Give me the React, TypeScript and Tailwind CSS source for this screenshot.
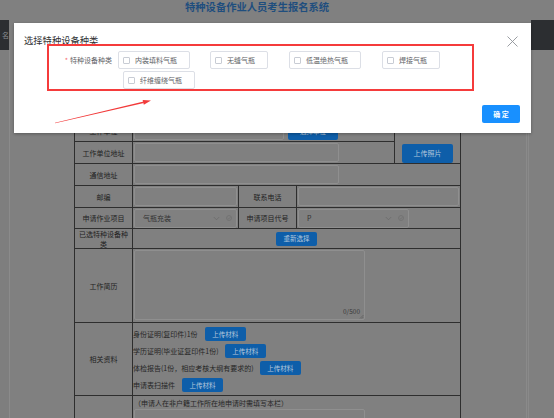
import React from "react";

const Label = ({ children, className = "" }: { children?: React.ReactNode; className?: string }) => (
  <div className={`flex items-center justify-center bg-[#808080] text-center text-[7px] leading-[10px] text-[#222222] ${className}`}>
    {children}
  </div>
);

const Cell = ({ children, className = "" }: { children?: React.ReactNode; className?: string }) => (
  <div className={`flex bg-[#808080] ${className}`}>{children}</div>
);

const Input = ({ className = "" }: { className?: string }) => (
  <div className={`rounded-[2px] border border-[#8f8f8f] ${className}`} />
);

const Btn = ({ children, className = "" }: { children?: React.ReactNode; className?: string }) => (
  <div
    className={`flex items-center justify-center rounded-[2px] bg-[#0e5ea9] text-[6.5px] leading-none text-[#b3c7dc] ${className}`}
  >
    {children}
  </div>
);

const SelectBox = ({ text, className = "", textClass = "" }: { text: string; className?: string; textClass?: string }) => (
  <div className={`flex items-center rounded-[2px] border border-[#8f8f8f] ${className}`}>
    <span className={`flex-1 text-[7px] leading-none text-[#333333] ${textClass}`}>{text}</span>
    <svg width="7" height="5" viewBox="0 0 7 5" className="mr-[6px]">
      <path d="M0.8 1 L3.5 3.8 L6.2 1" fill="none" stroke="#6b6b6b" strokeWidth="0.8" />
    </svg>
    <svg width="6" height="6" viewBox="0 0 6 6" className="mr-[4px]">
      <circle cx="3" cy="3" r="2.5" fill="none" stroke="#6b6b6b" strokeWidth="0.6" />
      <path d="M1.7 3.1 L2.7 4 L4.3 2.2" fill="none" stroke="#6b6b6b" strokeWidth="0.6" />
    </svg>
  </div>
);

const Check = ({ label, w, className = "" }: { label: string; w: string; className?: string }) => (
  <div
    className={`flex h-[18px] items-center rounded-[2px] border border-[#dcdfe6] bg-white pl-[4px] ${w} ${className}`}
  >
    <span className="h-[7px] w-[7px] rounded-[1px] border border-[#c8ccd4] bg-white" />
    <span className="ml-[5px] whitespace-nowrap text-[7px] leading-none text-[#606266]">{label}</span>
  </div>
);

export default function App() {
  return (
    <div className="relative h-[418px] w-[554px] overflow-hidden bg-[#808080] font-['Noto_Sans_CJK_SC','Noto_Sans',sans-serif]">
      {/* header */}
      <div className="flex h-[20px] pl-[185px] pt-[1px]">
        <span className="whitespace-nowrap text-[10.3px] font-bold leading-[12px] text-[#1f4e7e]">
          特种设备作业人员考生报名系统
        </span>
      </div>
      {/* nav */}
      <div className="flex h-[30px]">
        <div className="flex w-[9px] items-center justify-end bg-[#2c2e31]">
          <span className="whitespace-nowrap text-[7px] leading-none text-[#8d8f92]">名</span>
        </div>
        <div className="flex-1" />
        <div className="w-[23px] bg-[#2c2e31]" />
      </div>
      {/* main */}
      <div className="flex h-[368px]">
        <div className="w-[10px] border-r border-[#8b8b8b] bg-[#7e7e7e]" />
        <div className="w-[64px]" />
        <div className="mt-[3px] w-[387px]">
          <div className="grid grid-cols-[57px_105px_57px_97px_65px] grid-rows-[21px_21px_21px_21px_21px_21px_21px_20px_19px_73px_72px_40px] gap-px bg-[#2e2e2e] p-px">
            {/* rows covered by the dialog */}
            <Label />
            <Cell className="items-center pl-px">
              <Input className="h-[19px] w-[102px]" />
            </Cell>
            <Label />
            <Cell className="items-center pl-px">
              <Input className="h-[19px] w-[95px]" />
            </Cell>
            <Cell className="row-span-5 items-end justify-center">
              <Btn className="h-[19px] w-[51px] text-[7px]">上传照片</Btn>
            </Cell>

            <Label />
            <Cell className="items-center pl-px">
              <Input className="h-[19px] w-[102px]" />
            </Cell>
            <Label />
            <Cell className="items-center pl-px">
              <Input className="h-[19px] w-[95px]" />
            </Cell>

            <Label />
            <Cell className="items-center pl-px">
              <Input className="h-[19px] w-[102px]" />
            </Cell>
            <Label />
            <Cell className="items-center pl-px">
              <Input className="h-[19px] w-[95px]" />
            </Cell>

            <Label>工作单位</Label>
            <Cell className="col-span-3 items-end pb-px pl-px">
              <Input className="h-[18px] w-[150px]" />
              <Btn className="ml-[4px] h-[18px] w-[50px]">选择单位</Btn>
            </Cell>

            {/* visible rows */}
            <Label>工作单位地址</Label>
            <Cell className="col-span-3 items-center pl-px">
              <Input className="h-[19px] w-[205px]" />
            </Cell>

            <Label>通信地址</Label>
            <Cell className="col-span-4 items-center pl-px">
              <Input className="h-[19px] w-[205px]" />
            </Cell>

            <Label>邮编</Label>
            <Cell className="items-center pl-px">
              <Input className="h-[19px] w-[103px]" />
            </Cell>
            <Label>联系电话</Label>
            <Cell className="col-span-2 items-center pl-px">
              <Input className="h-[19px] w-[161px]" />
            </Cell>

            <Label>申请作业项目</Label>
            <Cell className="items-center pl-px">
              <SelectBox text="气瓶充装" className="h-[19px] w-[103px]" textClass="pl-[8px]" />
            </Cell>
            <Label>申请项目代号</Label>
            <Cell className="col-span-2 items-center pl-px">
              <SelectBox text="P" className="h-[19px] w-[111px]" textClass="pl-[8px]" />
            </Cell>

            <Label className="px-[3px]">已选特种设备种类</Label>
            <Cell className="col-span-4 items-center justify-center">
              <Btn className="h-[14px] w-[41px]">重新选择</Btn>
            </Cell>

            <Label>工作简历</Label>
            <Cell className="col-span-4 items-start pl-px pt-px">
              <div className="relative h-[70px] w-[231px] rounded-[2px] border border-[#8f8f8f]">
                <span className="absolute bottom-[5px] right-[4px] text-[6.5px] leading-none text-[#3a3a3a]">0/500</span>
                <svg width="5" height="5" viewBox="0 0 5 5" className="absolute bottom-0 right-0">
                  <path d="M1 4.5 L4.5 1 M2.8 4.5 L4.5 2.8" stroke="#555555" strokeWidth="0.6" />
                </svg>
              </div>
            </Cell>

            <Label>相关资料</Label>
            <Cell className="col-span-4 flex-col justify-center gap-[3px] pt-px">
              <div className="flex items-center">
                <span className="whitespace-nowrap text-[7px] leading-none text-[#262626]">身份证明(复印件)1份</span>
                <Btn className="ml-[7px] h-[14px] w-[41px]">上传材料</Btn>
              </div>
              <div className="flex items-center">
                <span className="whitespace-nowrap text-[7px] leading-none text-[#262626]">学历证明(毕业证复印件1份)</span>
                <Btn className="ml-[6px] h-[14px] w-[41px]">上传材料</Btn>
              </div>
              <div className="flex items-center">
                <span className="whitespace-nowrap text-[7px] leading-none text-[#262626]">体检报告(1份，相应考核大纲有要求的)</span>
                <Btn className="ml-[6px] h-[14px] w-[41px]">上传材料</Btn>
              </div>
              <div className="flex items-center">
                <span className="whitespace-nowrap text-[7px] leading-none text-[#262626]">申请表扫描件</span>
                <Btn className="ml-[7px] h-[14px] w-[41px]">上传材料</Btn>
              </div>
            </Cell>

            <Label></Label>
            <Cell className="col-span-4 flex-col pl-px pt-[3px]">
              <span className="whitespace-nowrap text-[7px] leading-[8px] text-[#262626]">
                （申请人在非户籍工作所在地申请时需填写本栏）
              </span>
              <Input className="mt-[2px] h-[20px] w-[231px]" />
            </Cell>
          </div>
        </div>
        <div className="w-[65px]" />
        <div className="w-[3px] border-x border-[#8a8a8a]" />
        <div className="flex-1" />
      </div>

      {/* dialog */}
      <div className="absolute left-[14px] top-[23px] flex h-[110px] w-[517px] flex-col bg-white shadow-[0_1px_3px_rgba(0,0,0,0.3)]">
        <div className="pl-[10px] pt-[11px] text-[9.3px] leading-[12px] text-[#303133]">选择特种设备种类</div>
        <svg width="11" height="11" viewBox="0 0 11 11" className="absolute right-[13px] top-[13px]">
          <path d="M0.5 0.5 L10.5 10.5 M10.5 0.5 L0.5 10.5" stroke="#909399" strokeWidth="0.9" />
        </svg>
        <div className="mt-[5px] flex pl-[48px]">
          <div className="flex h-[18px] w-[56px] items-center justify-end pr-[6px]">
            <span className="mr-[2px] text-[7px] leading-none text-[#f56c6c]">*</span>
            <span className="whitespace-nowrap text-[7px] leading-none text-[#606266]">特种设备种类</span>
          </div>
          <div className="flex w-[352px] flex-wrap gap-y-[2px]">
            <Check label="内装填料气瓶" w="w-[72px]" className="mr-[15px]" />
            <Check label="无缝气瓶" w="w-[58px]" className="ml-[5px] mr-[16px]" />
            <Check label="低温绝热气瓶" w="w-[72px]" className="ml-[5px] mr-[16px]" />
            <Check label="焊接气瓶" w="w-[58px]" className="ml-[5px] mr-[15px]" />
            <Check label="纤维缠绕气瓶" w="w-[72px]" className="ml-[5px]" />
          </div>
        </div>
        <div className="mt-auto flex justify-end pb-[10px] pr-[11px]">
          <div className="flex h-[18px] w-[38px] items-center justify-center rounded-[2px] bg-[#1890ff] text-[7px] font-bold leading-none text-white">
            确 定
          </div>
        </div>
        {/* red annotation box */}
        <div className="pointer-events-none absolute left-[33px] top-[21px] h-[47px] w-[427px] border-2 border-[#f53b3b]" />
      </div>

      {/* red arrow annotation */}
      <svg width="554" height="418" viewBox="0 0 554 418" className="pointer-events-none absolute left-0 top-0">
        <polygon points="55,123.3 55,122.7 143.6,101.4 143.9,103" fill="#f23a3a" />
        <polygon points="151,100.5 143.8,104.7 142.6,99.9" fill="#f23a3a" />
      </svg>
    </div>
  );
}
